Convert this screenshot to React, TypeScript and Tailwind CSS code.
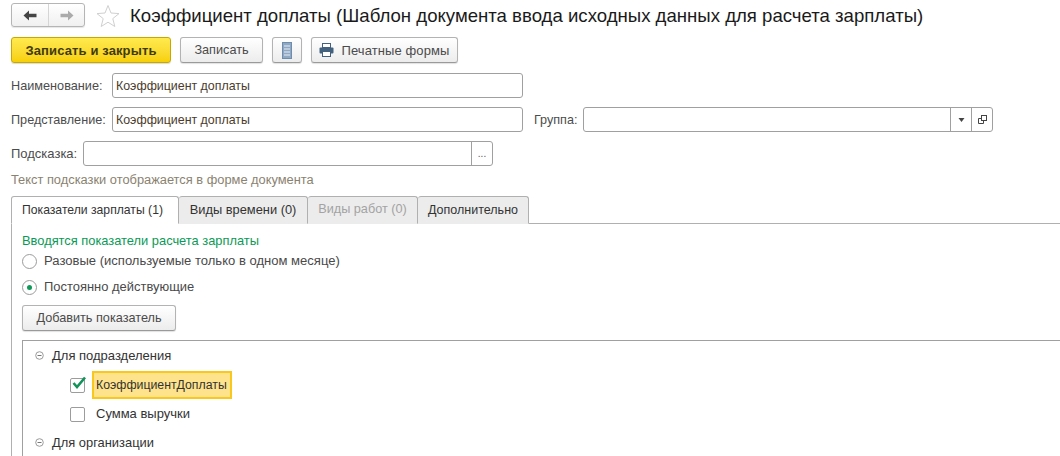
import React from "react";

const btn = "h-[26px] pt-[2px] flex items-center justify-center rounded-[3px] border border-[#b3b3b3] border-b-[#9a9a9a] bg-gradient-to-b from-white to-[#ececec] text-[#4b4b4b] shadow-[0_1px_1px_rgba(0,0,0,0.12)]";
const input = "h-[25px] rounded-[3px] border border-[#a0a0a0] bg-white flex items-center text-[12.4px] text-[#4b3b2b]";
const label = "text-[#4c4c4c] pt-[2px]";

function Field({ text, w }: { text?: string; w: string }) {
  return <div className={`${input} ${w} pl-[3px] pt-[2px]`}>{text}</div>;
}

function Tab({ text, active, disabled, w, size }: { text: string; active?: boolean; disabled?: boolean; w: string; size: string }) {
  return (
    <div
      className={`${w} ${size} h-[28px] flex items-center justify-center rounded-t-[3px] border border-[#b0b0b0] ${
        active ? "border-b-white bg-white text-[#333] relative z-10 pr-[5px]" : "border-l-0 bg-[#ececec] border-b-transparent"
      } ${disabled ? "text-[#a3a3a3]" : "text-[#333]"}`}
    >
      {text}
    </div>
  );
}

function Radio({ checked, text, size }: { checked?: boolean; text: string; size: string }) {
  return (
    <div className="flex items-center h-[20px] pl-[11px]">
      <div className="w-[15px] h-[15px] rounded-full border border-[#9c9c9c] bg-white flex items-center justify-center">
        {checked && <div className="w-[5px] h-[5px] rounded-full bg-[#0f9a58]" />}
      </div>
      <span className={`ml-[7px] ${size} text-[#4a4a4a]`}>{text}</span>
    </div>
  );
}

function Minus() {
  return (
    <svg width="9" height="9" viewBox="0 0 9 9" className="shrink-0">
      <circle cx="4.5" cy="4.5" r="3.8" fill="none" stroke="#9a9a9a" />
      <path d="M2.5 4.5h4" stroke="#777" />
    </svg>
  );
}

function Check({ checked }: { checked?: boolean }) {
  return (
    <div className="relative w-[15px] h-[15px] rounded-[2px] border border-[#9c9c9c] bg-white shrink-0">
      {checked && (
        <svg width="16" height="15" viewBox="0 0 16 15" className="absolute left-[0px] top-[-4px]">
          <path d="M2.5 8 L6 12 L14 2.5" fill="none" stroke="#12935a" strokeWidth="2.6" />
        </svg>
      )}
    </div>
  );
}

export default function App() {
  return (
    <div className="w-[1060px] h-[456px] overflow-hidden bg-white pl-[11px] font-['Liberation_Sans',Arial,sans-serif]">
      <div className="h-[37px] pt-[3px] flex items-start">
        <div className="w-[74px] h-[24px] flex rounded-[3px] border border-[#b5b5b5] bg-gradient-to-b from-white to-[#f0f0f0] shadow-[0_1px_1px_rgba(0,0,0,0.1)]">
          <div className="w-[37px] flex items-center justify-center border-r border-[#d5d5d5]">
            <svg width="14" height="11" viewBox="0 0 14 11"><path d="M0.5 5.5 L6 0.5 V3.8 H13.5 V7.2 H6 V10.5 Z" fill="#454545" /></svg>
          </div>
          <div className="flex-1 flex items-center justify-center">
            <svg width="14" height="11" viewBox="0 0 14 11"><path d="M13.5 5.5 L8 0.5 V3.8 H0.5 V7.2 H8 V10.5 Z" fill="#ababab" /></svg>
          </div>
        </div>
        <svg width="24" height="24" viewBox="0 0 24 24" className="ml-[11px] mt-[1px]">
          <path d="M12 1.5 L15 9 L23 9.6 L16.8 14.6 L18.8 22.5 L12 18.2 L5.2 22.5 L7.2 14.6 L1 9.6 L9 9 Z" fill="none" stroke="#d0d0d0" />
        </svg>
        <div className="ml-[10px] text-[18.6px] leading-[26px] text-[#1a1a1a] whitespace-nowrap">
          Коэффициент доплаты (Шаблон документа ввода исходных данных для расчета зарплаты)
        </div>
      </div>

      <div className="flex gap-[9px] h-[36px]">
        <div className="w-[160px] h-[26px] pt-[2px] flex items-center justify-center rounded-[3px] border border-[#c7a800] bg-gradient-to-b from-[#ffea4d] to-[#f7d000] text-[13px] font-bold text-[#3f3a10] tracking-[0.12px] shadow-[0_1px_1px_rgba(0,0,0,0.15)]">
          Записать и закрыть
        </div>
        <div className={`${btn} w-[83px] text-[12.7px]`}>Записать</div>
        <div className={`${btn} w-[30px]`}>
          <svg width="10" height="17" viewBox="0 0 10 17" className="-mt-[2px]">
            <rect x="0.5" y="0.5" width="9" height="16" fill="#8fa9c4" stroke="#6e8cab" />
            <path d="M2 4h6M2 7h6M2 10h6M2 13h6" stroke="#e8eef4" />
          </svg>
        </div>
        <div className={`${btn} w-[147px] text-[13px] tracking-[0.1px]`}>
          <svg width="15" height="14" viewBox="0 0 15 14" className="mr-[7px] -mt-[2px]">
            <rect x="3.5" y="0.5" width="8" height="4" fill="#fff" stroke="#41617f" />
            <rect x="0.5" y="4.5" width="14" height="6" rx="1" fill="#41617f" />
            <rect x="3.5" y="8.5" width="8" height="5" fill="#fff" stroke="#41617f" />
          </svg>
          Печатные формы
        </div>
      </div>

      <div className="flex items-center h-[25px] mb-[9px]">
        <div className={`${label} w-[101px] text-[12.7px]`}>Наименование:</div>
        <Field text="Коэффициент доплаты" w="w-[411px]" />
      </div>

      <div className="flex items-center h-[25px] mb-[9px]">
        <div className={`${label} w-[101px] text-[12.67px] whitespace-nowrap`}>Представление:</div>
        <Field text="Коэффициент доплаты" w="w-[411px]" />
        <div className={`${label} ml-[11px] w-[49px] text-[12.6px]`}>Группа:</div>
        <div className={`${input} w-[410px]`}>
          <div className="flex-1" />
          <div className="w-[21px] h-full border-l border-[#a0a0a0] flex items-center justify-center">
            <svg width="7" height="4" viewBox="0 0 7 4"><path d="M0.5 0 H6.5 L3.5 4 Z" fill="#444" /></svg>
          </div>
          <div className="w-[21px] h-full border-l border-[#a0a0a0] flex items-center justify-center">
            <svg width="9" height="9" viewBox="0 0 9 9" fill="none" stroke="#444">
              <rect x="3.5" y="0.5" width="5" height="5" />
              <path d="M3 3.5 H0.5 V8.5 H5.5 V6" />
            </svg>
          </div>
        </div>
      </div>

      <div className="flex items-center h-[25px]">
        <div className="text-[#4c4c4c] w-[72px] text-[13px]">Подсказка:</div>
        <div className={`${input} w-[410px]`}>
          <div className="flex-1" />
          <div className="w-[21px] h-full border-l border-[#a0a0a0] flex items-center justify-center text-[10px] text-[#555]">...</div>
        </div>
      </div>

      <div className="h-[30px] pt-[6px] text-[12.85px] leading-[15px] text-[#8a8270]">
        Текст подсказки отображается в форме документа
      </div>

      <div className="flex">
        <Tab text="Показатели зарплаты (1)" active w="w-[168px]" size="text-[12.2px]" />
        <Tab text="Виды времени (0)" w="w-[129px]" size="text-[12.85px]" />
        <Tab text="Виды работ (0)" disabled w="w-[110px]" size="text-[12.7px]" />
        <Tab text="Дополнительно" w="w-[111px]" size="text-[12.5px]" />
      </div>

      <div className="-mt-px border-l border-t border-[#b0b0b0] pl-[10px] pt-[9px] h-[240px] w-[1049px]">
        <div className="text-[12.87px] leading-[15px] text-[#0a9a55]">Вводятся показатели расчета зарплаты</div>
        <div className="-ml-[11px] mt-[3px] flex flex-col gap-[6px]">
          <Radio text="Разовые (используемые только в одном месяце)" size="text-[13.05px]" />
          <Radio checked text="Постоянно действующие" size="text-[12.95px]" />
        </div>
        <div className={`${btn} w-[154px] mt-[8px] text-[12.7px]`}>Добавить показатель</div>

        <div className="mt-[9px] border-l border-t border-[#a0a0a0] w-[1040px] h-[130px] pl-[12px] pt-[6px]">
          <div className="flex items-center h-[17px]">
            <Minus />
            <span className="ml-[8px] text-[13px] text-[#333]">Для подразделения</span>
          </div>
          <div className="flex items-center h-[28px] mt-[7px] ml-[35px]">
            <Check checked />
            <div className="ml-[7px] w-[140px] h-[28px] flex items-center pl-[2px] border-2 border-[#f9c81c] bg-[#ffe38c] text-[12.3px] text-[#333]">
              КоэффициентДоплаты
            </div>
          </div>
          <div className="flex items-center h-[28px] mt-[1px] ml-[35px]">
            <Check />
            <span className="ml-[11px] text-[13px] text-[#333]">Сумма выручки</span>
          </div>
          <div className="flex items-center h-[17px] mt-[6px]">
            <Minus />
            <span className="ml-[8px] text-[12.9px] text-[#333]">Для организации</span>
          </div>
        </div>
      </div>
    </div>
  );
}
